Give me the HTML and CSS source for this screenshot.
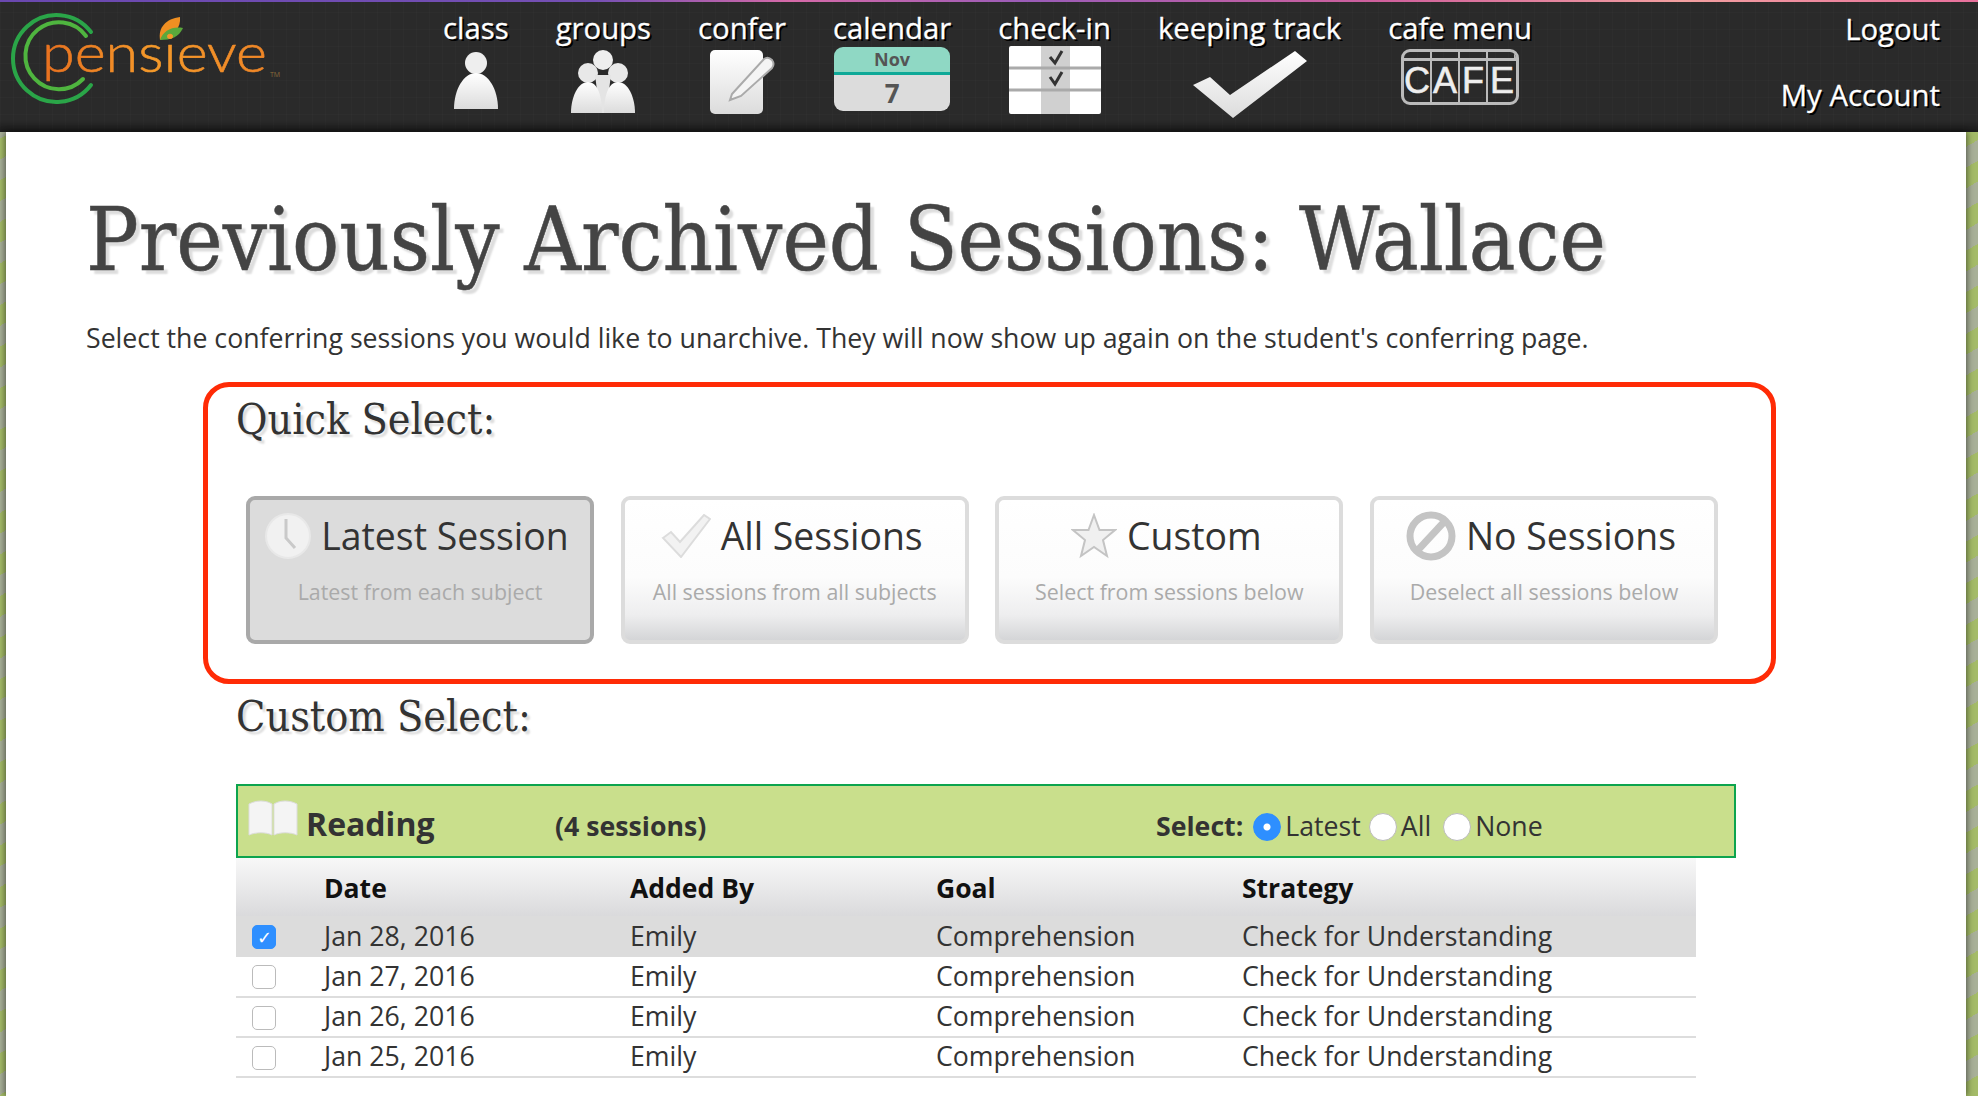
FILE: index.html
```html
<!DOCTYPE html>
<html lang="en">
<head>
<meta charset="utf-8">
<title>Previously Archived Sessions</title>
<link rel="stylesheet" href="styles.css">
</head>
<body>
<header class="topbar">
  <a class="logo" href="#">
    <svg width="300" height="120" viewBox="0 0 300 120">
      <path d="M91 32A43.5 43.500 0 1 0 91 85" fill="none" stroke="#2aa548" stroke-width="4" stroke-linecap="round"/>
      <path d="M86 36A33.5 33.500 0 1 0 83 79" fill="none" stroke="#4fb53f" stroke-width="4" stroke-linecap="round"/>
      <path d="M160 40C158 27 166 19 180 17C181 27 175 36 160 40Z" fill="#ef8f22"/>
      <path d="M160 40C163 31 172 26 183 28C179 37 171 40 160 40Z" fill="#5aa83c"/>
      <defs><linearGradient id="logoText" x1="0" x2="1"><stop offset="0" stop-color="#e8701f"/><stop offset="0.5" stop-color="#f59a2a"/><stop offset="1" stop-color="#ef8526"/></linearGradient></defs>
      <text class="logo-word" x="42" y="72" textLength="225" lengthAdjust="spacingAndGlyphs" fill="url(#logoText)" stroke="url(#logoText)">pensieve</text>
      <text class="logo-tm" x="270" y="77" fill="#8a6a3a">TM</text>
    </svg>
  </a>
  <nav class="nav">
    <a class="nav-item" href="#"><span class="nav-label">class</span>
      <svg class="nav-icon" width="48" height="64" viewBox="0 0 48 64"><defs><linearGradient id="ig" x1="0" y1="0" x2="0" y2="1"><stop offset="0" stop-color="#fff"/><stop offset="1" stop-color="#dcdcdc"/></linearGradient></defs><circle cx="24" cy="14" r="11" fill="#eee"/><path d="M2 60C2 40 12 24 24 24S46 40 46 60Z" fill="url(#ig)"/></svg></a>
    <a class="nav-item" href="#"><span class="nav-label">groups</span>
      <svg class="nav-icon" width="66" height="66" viewBox="0 0 66 66"><circle cx="33" cy="11" r="10" fill="#eee"/><circle cx="18" cy="24" r="10" fill="#e8e8e8"/><circle cx="48" cy="24" r="10" fill="#e8e8e8"/><path d="M25 26H41L36 64H30Z" fill="#e4e4e4"/><path d="M1 64C1 48 8 33 18 33S32 48 32 64Z" fill="url(#ig)"/><path d="M34 64C34 48 38 33 48 33S65 48 65 64Z" fill="url(#ig)"/></svg></a>
    <a class="nav-item" href="#"><span class="nav-label">confer</span>
      <svg class="nav-icon" width="68" height="66" viewBox="0 0 68 66"><rect x="2" y="1" width="53" height="64" rx="5" fill="url(#ig)"/><path d="M24 45L56 10Q60 7 64 11Q67 15 64 19L33 47L22 51Z" fill="#f4f4f4" stroke="#aaa" stroke-width="2"/></svg></a>
    <a class="nav-item" href="#"><span class="nav-label">calendar</span>
      <span class="cal"><span class="cal-month">Nov</span><span class="cal-day">7</span></span></a>
    <a class="nav-item" href="#"><span class="nav-label">check-in</span>
      <svg class="nav-icon nav-icon-up" width="92" height="68" viewBox="0 0 92 68"><rect width="92" height="68" rx="2" fill="#fff"/><rect x="32" width="29" height="68" fill="#d0d0d0"/><path d="M0 22H92M0 44H92" stroke="#aaa" stroke-width="3"/><path d="M41 11L46 17L53 5M41 31L46 38L53 26" fill="none" stroke="#333" stroke-width="3"/></svg></a>
    <a class="nav-item" href="#"><span class="nav-label">keeping track</span>
      <svg class="nav-icon" width="120" height="70" viewBox="0 0 120 70"><path d="M3 36L20 28L40 46L105 2L117 12L43 69Z" fill="url(#ig)"/></svg></a>
    <a class="nav-item" href="#"><span class="nav-label">cafe menu</span>
      <span class="cafe"><span class="cafe-top"></span><span class="cafe-cells"><b>C</b><b>A</b><b>F</b><b>E</b></span></span></a>
  </nav>
  <div class="account">
    <a href="#">Logout</a>
    <a href="#">My Account</a>
  </div>
</header>
<main class="page">
  <h1 class="title">Previously Archived Sessions: Wallace</h1>
  <p class="intro">Select the conferring sessions you would like to unarchive. They will now show up again on the student's conferring page.</p>
  <section class="quick">
    <h2 class="sub">Quick Select:</h2>
    <div class="quick-buttons">
      <button class="qbtn is-active">
        <span class="qbtn-head">
          <svg width="46" height="46" viewBox="0 0 46 46"><circle cx="23" cy="23" r="22" fill="#f1f1f1" stroke="#e8e8e8" stroke-width="2"/><path d="M21 6V25L30 35" fill="none" stroke="#c9c9c9" stroke-width="3"/></svg>
          <span>Latest Session</span></span>
        <span class="qbtn-sub">Latest from each subject</span>
      </button>
      <button class="qbtn">
        <span class="qbtn-head">
          <svg width="50" height="44" viewBox="0 0 50 44"><path d="M2 24L10 18L19 28L43 1L49 5L20 43Z" fill="#f2f2f2" stroke="#dcdcdc" stroke-width="2"/></svg>
          <span>All Sessions</span></span>
        <span class="qbtn-sub">All sessions from all subjects</span>
      </button>
      <button class="qbtn">
        <span class="qbtn-head">
          <svg width="46" height="46" viewBox="0 0 46 46"><path d="M23 2L28.500 17H44L32 27L36 43L23 34L10 43L14 27L2 17H17.500Z" fill="#f0f0f0" stroke="#c4c4c4" stroke-width="2"/></svg>
          <span>Custom</span></span>
        <span class="qbtn-sub">Select from sessions below</span>
      </button>
      <button class="qbtn">
        <span class="qbtn-head">
          <svg width="50" height="50" viewBox="0 0 50 50"><circle cx="25" cy="25" r="21" fill="none" stroke="#c4c4c4" stroke-width="7"/><path d="M12 39L38 11" stroke="#c4c4c4" stroke-width="7"/></svg>
          <span>No Sessions</span></span>
        <span class="qbtn-sub">Deselect all sessions below</span>
      </button>
    </div>
  </section>
  <section class="custom">
    <h2 class="sub">Custom Select:</h2>
    <div class="subject">
      <svg class="subject-icon" width="50" height="38" viewBox="0 0 50 38"><path d="M1 5C8 1 18 1 24 5V36C18 33 8 33 1 36Z" fill="#f4f4f4" stroke="#ddd"/><path d="M49 5C42 1 32 1 26 5V36C32 33 42 33 49 36Z" fill="#f4f4f4" stroke="#ddd"/></svg>
      <span class="subject-name">Reading</span>
      <span class="subject-count">(4 sessions)</span>
      <span class="subject-select">
        <b>Select:</b>
        <span class="radio is-on"></span><span class="radio-label">Latest</span>
        <span class="radio"></span><span class="radio-label radio-label-wide">All</span>
        <span class="radio"></span><span class="radio-label">None</span>
      </span>
    </div>
    <table class="sessions">
      <thead><tr><th class="col-check"></th><th class="col-text">Date</th><th class="col-text">Added By</th><th class="col-text">Goal</th><th>Strategy</th></tr></thead>
      <tbody>
        <tr class="is-selected"><td><span class="check is-on">✓</span></td><td>Jan 28, 2016</td><td>Emily</td><td>Comprehension</td><td>Check for Understanding</td></tr>
        <tr><td><span class="check"></span></td><td>Jan 27, 2016</td><td>Emily</td><td>Comprehension</td><td>Check for Understanding</td></tr>
        <tr><td><span class="check"></span></td><td>Jan 26, 2016</td><td>Emily</td><td>Comprehension</td><td>Check for Understanding</td></tr>
        <tr><td><span class="check"></span></td><td>Jan 25, 2016</td><td>Emily</td><td>Comprehension</td><td>Check for Understanding</td></tr>
      </tbody>
    </table>
  </section>
</main>
</body>
</html>
```
FILE: styles.css
```css
* { box-sizing: border-box; }
html, body { height: 100%; }
body {
  margin: 0;
  height: 1096px;
  overflow: hidden;
  display: flex;
  flex-direction: column;
  font-family: "Open Sans", "Noto Sans", sans-serif;
  color: #333;
  background: repeating-linear-gradient(-30deg, #a4bb68 0 18px, #a8b098 18px 36px);
}
a { color: inherit; text-decoration: none; }

/* top bar */
.topbar {
  flex: none;
  height: 132px;
  display: flex;
  align-items: flex-start;
  border-top: 2px solid transparent;
  background:
    linear-gradient(to bottom, rgba(0,0,0,0) 118px, rgba(0,0,0,.38) 130px),
    repeating-linear-gradient(90deg, rgba(255,255,255,.016) 0 1px, rgba(0,0,0,0) 1px 13px),
    repeating-linear-gradient(0deg, rgba(255,255,255,.014) 0 1px, rgba(0,0,0,0) 1px 17px),
    #2a2a2a;
  position: relative;
}
.topbar::before {
  content: "";
  position: absolute;
  left: 0; right: 0; top: -2px;
  height: 2px;
  background: linear-gradient(90deg, #6a48b0 0, #7550b4 30%, #d66aa8 40%, #9a5cb8 52%, #d0609c 70%, #f3a0a0 85%, #e8709c 100%);
}
.logo { flex: none; width: 443px; height: 118px; display: block; margin-top: -2px; }
.logo svg { display: block; }
.logo-word { font-family: "Lato", "Open Sans", sans-serif; font-weight: 300; font-size: 54px; stroke-width: .6px; }
.logo-tm { font-family: "Open Sans", sans-serif; font-size: 7px; }
.nav { display: flex; gap: 47px; flex: none; }
.nav-item { display: flex; flex-direction: column; align-items: center; }
.nav-label {
  color: #fff;
  font-size: 29.3px;
  line-height: 40px;
  height: 44px;
  margin-top: 6px;
  white-space: nowrap;
  -webkit-text-stroke: .3px #fff;
  text-shadow: 2px 2px 0 #000;
}
.nav-icon { display: block; margin-top: -3px; }
.nav-icon-up { margin-top: -6px; }

.cal {
  display: flex;
  flex-direction: column;
  width: 116px;
  height: 64px;
  margin-top: -5px;
  border-radius: 9px;
  overflow: hidden;
  font-weight: 700;
  color: #555;
  text-align: center;
}
.cal-month { height: 28px; line-height: 25px; font-size: 18px; background: #8fd8c4; border-bottom: 3px solid #0ea998; }
.cal-day { flex: 1; line-height: 36px; font-size: 26px; background: #dcdcdc; }

.cafe {
  display: block;
  width: 118px;
  height: 56px;
  margin-top: -3px;
  border: 3px solid #bbb;
  border-radius: 9px;
  overflow: hidden;
}
.cafe-top {
  display: block;
  height: 9px;
  border-bottom: 3px solid #bbb;
  background: repeating-linear-gradient(90deg, transparent 0 26px, #bbb 26px 28px);
}
.cafe-cells { display: grid; grid-template-columns: repeat(4, 1fr); height: 41px; }
.cafe-cells b {
  font-family: "Liberation Sans Narrow", "Liberation Sans", sans-serif;
  font-size: 36px;
  line-height: 40px;
  font-weight: 400;
  color: #eee;
  text-align: center;
  border-right: 2px solid #bbb;
  -webkit-text-stroke: .6px #eee;
}
.cafe-cells b:last-child { border-right: 0; }

.account {
  margin-left: auto;
  padding: 7px 38px 0 0;
  display: flex;
  flex-direction: column;
  align-items: flex-end;
  gap: 25px;
  color: #fff;
  font-size: 29.3px;
  line-height: 41px;
  -webkit-text-stroke: .3px #fff;
  text-shadow: 2px 2px 0 #000;
}

/* page */
.page {
  flex: 1;
  margin: 0 12px 0 6px;
  padding: 0 0 0 80px;
  background: #fff;
  box-shadow: -2px 0 6px rgba(0,0,0,.35), 2px 0 6px rgba(0,0,0,.35);
  position: relative;
}
.title {
  margin: 0;
  padding-top: 58px;
  font-family: "DejaVu Serif Condensed", "DejaVu Serif", serif;
  font-weight: 400;
  font-size: 87.2px;
  line-height: 100px;
  color: #444;
  white-space: nowrap;
  -webkit-text-stroke: .5px #444;
  text-shadow: 4px 4px 2px #ddd;
}
.intro {
  margin: 30px 0 0;
  font-size: 26.7px;
  line-height: 36px;
  color: #333;
  white-space: nowrap;
}
.quick {
  width: 1573px;
  height: 302px;
  margin: 26px 0 0 117px;
  padding: 0 28px;
  border: 5px solid #ff2b06;
  border-radius: 26px;
}
.sub {
  margin: 0;
  font-family: "DejaVu Serif Condensed", "DejaVu Serif", serif;
  font-weight: 400;
  font-size: 42.7px;
  line-height: 60px;
  color: #333;
  text-shadow: 3px 3px 2px #ddd;
}
.quick .sub { padding-top: 2px; }
.quick-buttons { display: flex; gap: 26.66px; margin: 47px 0 0 10px; }
.qbtn {
  width: 348px;
  height: 148px;
  padding: 0;
  display: flex;
  flex-direction: column;
  align-items: center;
  border: 4px solid #dcdcdc;
  border-radius: 9px;
  font-family: inherit;
  background: linear-gradient(to bottom, #fff 0, #fcfcfc 55%, #eeeeef 82%, #d4d5d7 100%);
}
.qbtn.is-active { background: #dcdcdc; border-color: #a9a9a9; }
.qbtn-head {
  display: flex;
  align-items: center;
  justify-content: center;
  gap: 10px;
  height: 58px;
  margin-top: 7px;
  padding-right: 6px;
  color: #333;
  font-size: 37.4px;
  line-height: 58px;
  white-space: nowrap;
}
.qbtn-sub { margin-top: 12px; color: #aaa; font-size: 21.4px; line-height: 30px; white-space: nowrap; }

.custom { margin: 0 0 0 150px; width: 1500px; padding-top: 2px; }
.subject {
  display: flex;
  align-items: center;
  height: 74px;
  margin-top: 38px;
  padding: 0 0 0 10px;
  border: 2px solid #0ca44e;
  background: #c9df8c;
}
.subject-icon { flex: none; margin-top: -6px; }
.subject-name { width: 249px; margin-left: 8px; font-size: 32px; font-weight: 700; color: #333; white-space: nowrap; margin-top: 4px; }
.subject-count { width: 601px; font-size: 26.7px; font-weight: 700; color: #333; white-space: nowrap; margin-top: 9px; }
.subject-select { display: flex; align-items: center; font-size: 26.7px; color: #333; margin-top: 9px; white-space: nowrap; }
.subject-select b { margin-right: 10px; }
.radio {
  width: 28px;
  height: 28px;
  border-radius: 50%;
  background: #fff;
  border: 1px solid #bbb;
  margin-right: 4px;
  margin-top: 2px;
}
.radio-label { margin-right: 8px; }
.radio-label-wide { margin-right: 12px; }
.radio.is-on { background: radial-gradient(circle, #fff 0 3px, #2e8fff 4px); border-color: #2e8fff; }

.sessions {
  width: 1460px;
  border-collapse: collapse;
  table-layout: fixed;
  font-size: 26.7px;
  color: #333;
}
.sessions thead tr { height: 58px; background: linear-gradient(to bottom, #f8f8f8, #dadadc); }
.sessions th { padding: 2px 0 0; text-align: left; color: #111; font-weight: 700; font-size: 26.5px; }
.col-check { width: 88px; }
.col-text { width: 306px; }
.sessions td { padding: 0 0 2px; height: 40px; line-height: 36px; white-space: nowrap; border-bottom: 2px solid #ddd; }
.sessions td:first-child { padding-left: 16px; }
.is-selected td { background: #dcdcdc; border-bottom: 0; height: 41px; }
.check {
  display: block;
  width: 24px;
  height: 24px;
  margin-top: 3px;
  border: 1px solid #bbb;
  border-radius: 5px;
  background: #fff;
  font-size: 18px;
  line-height: 22px;
  text-align: center;
  color: #fff;
}
.check.is-on { background: #2e8fff; border-color: #2e8fff; }
```
